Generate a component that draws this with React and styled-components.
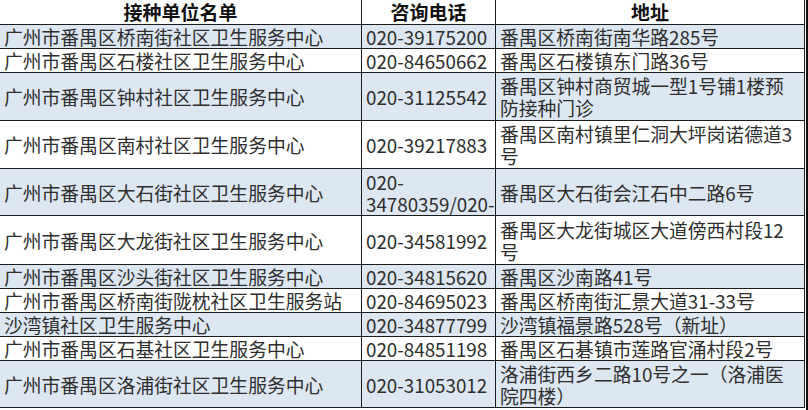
import React from "react";
import styled, { createGlobalStyle } from "styled-components";

const GlobalStyle = createGlobalStyle`
  html, body {
    margin: 0;
    padding: 0;
    background: #ffffff;
  }
  body {
    font-family: "Noto Sans CJK SC", "Noto Sans", sans-serif;
  }
`;

const rows = [
  { name: "广州市番禺区桥南街社区卫生服务中心", phone: "020-39175200", addr: "番禺区桥南街南华路285号", h: 23 },
  { name: "广州市番禺区石楼社区卫生服务中心", phone: "020-84650662", addr: "番禺区石楼镇东门路36号", h: 23 },
  { name: "广州市番禺区钟村社区卫生服务中心", phone: "020-31125542", addr: "番禺区钟村商贸城一型1号铺1楼预防接种门诊", h: 47 },
  { name: "广州市番禺区南村社区卫生服务中心", phone: "020-39217883", addr: "番禺区南村镇里仁洞大坪岗诺德道3号", h: 47 },
  { name: "广州市番禺区大石街社区卫生服务中心", phone: ["020-", "34780359/020-"], addr: "番禺区大石街会江石中二路6号", h: 46 },
  { name: "广州市番禺区大龙街社区卫生服务中心", phone: "020-34581992", addr: "番禺区大龙街城区大道傍西村段12号", h: 48 },
  { name: "广州市番禺区沙头街社区卫生服务中心", phone: "020-34815620", addr: "番禺区沙南路41号", h: 23 },
  { name: "广州市番禺区桥南街陇枕社区卫生服务站", phone: "020-84695023", addr: "番禺区桥南街汇景大道31-33号", h: 23 },
  { name: "沙湾镇社区卫生服务中心", phone: "020-34877799", addr: "沙湾镇福景路528号（新址）", h: 23 },
  { name: "广州市番禺区石基社区卫生服务中心", phone: "020-84851198", addr: "番禺区石碁镇市莲路官涌村段2号", h: 23 },
  { name: "广州市番禺区洛浦街社区卫生服务中心", phone: "020-31053012", addr: "洛浦街西乡二路10号之一（洛浦医院四楼）", h: 46 },
];

export default function App() {
  return (
    <>
      <GlobalStyle />
      <Frame>
        <Sheet>
          <HeadCell>接种单位名单</HeadCell>
          <HeadCell>咨询电话</HeadCell>
          <HeadCell>地址</HeadCell>
          {rows.map((r, i) => {
            const shaded = i % 2 === 0;
            return (
              <React.Fragment key={i}>
                <Cell $h={r.h} $shaded={shaded}>
                  {r.name}
                </Cell>
                <Cell $h={r.h} $shaded={shaded}>
                  {Array.isArray(r.phone)
                    ? r.phone.map((line, j) => <Line key={j}>{line}</Line>)
                    : r.phone}
                </Cell>
                <Cell $h={r.h} $shaded={shaded}>
                  {r.addr}
                </Cell>
              </React.Fragment>
            );
          })}
        </Sheet>
      </Frame>
    </>
  );
}

const Frame = styled.div`
  width: 808px;
  height: 410px;
  display: flex;
  box-sizing: border-box;
  border-right: 2px solid #111111;
  overflow: hidden;
`;

const Sheet = styled.div`
  display: grid;
  grid-template-columns: 361px 133px 308px;
  gap: 1px;
  background: #1c1c1c;
  border-right: 1px solid #1c1c1c;
  border-bottom: 1px solid #1c1c1c;
  align-self: flex-start;
`;

const HeadCell = styled.div`
  height: 24px;
  background: #ffffff;
  display: flex;
  align-items: center;
  justify-content: center;
  font-size: 19px;
  font-weight: 700;
  color: #111111;
  line-height: 20px;
`;

const Cell = styled.div`
  height: ${(p) => p.$h}px;
  background: ${(p) => (p.$shaded ? "#dde7f2" : "#ffffff")};
  display: flex;
  flex-direction: column;
  justify-content: center;
  padding: 1px 3px 0 4px;
  box-sizing: border-box;
  font-size: 18.8px;
  line-height: 22px;
  color: #2e2e2e;
  word-break: break-all;
`;

const Line = styled.span`
  display: block;
  white-space: nowrap;
`;
